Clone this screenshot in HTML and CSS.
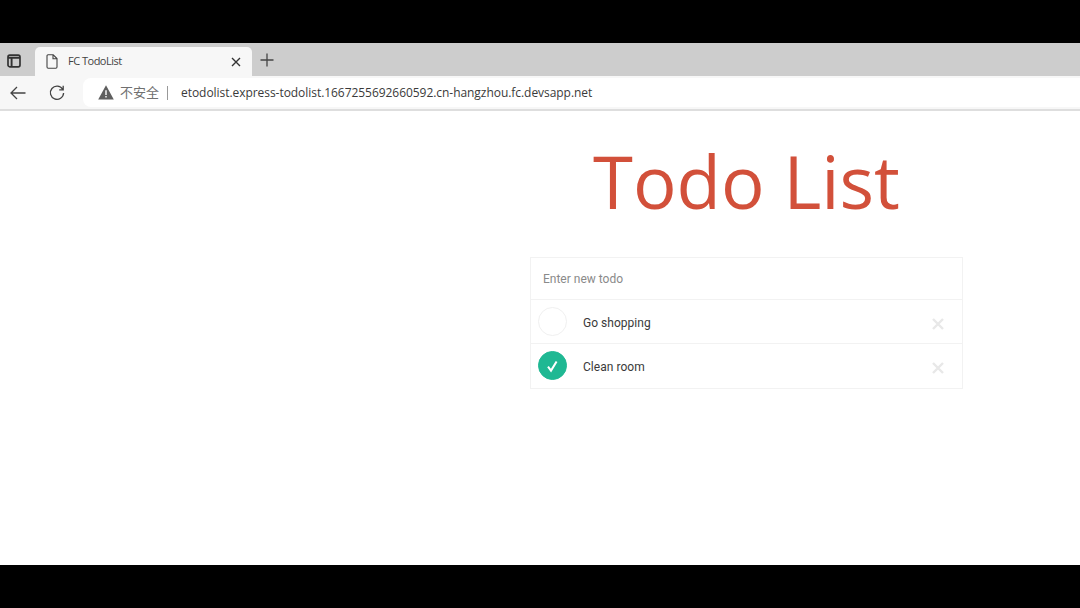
FILE: index.html
```html
<!DOCTYPE html>
<html lang="en">
<head>
<meta charset="utf-8">
<title>FC TodoList</title>
<link rel="stylesheet" href="styles.css">
</head>
<body>
<div class="letterbox"></div>
<div class="browser">
  <div class="tabstrip">
    <span class="winicon"><svg width="14" height="14" viewBox="0 0 14 14"><rect x="1" y="1.2" width="12" height="11.6" rx="1.8" fill="none" stroke="#333" stroke-width="1.7"/><path d="M1 3.8H13M4.6 3.8V12.8" stroke="#333" stroke-width="1.9" fill="none"/></svg></span>
    <div class="tab">
      <svg class="docicon" width="12" height="15" viewBox="0 0 12 15"><path d="M1 1.8A1 1 0 0 1 2 .8H7.2L11 4.6V13A1.2 1.2 0 0 1 9.8 14.2H2.2A1.2 1.2 0 0 1 1 13ZM7 1V4.8H11" fill="none" stroke="#444" stroke-width="1.1"/></svg>
      <span class="tabtitle">FC TodoList</span>
      <svg class="tabclose" width="10" height="10" viewBox="0 0 10 10"><path d="M1 1L9 9M9 1L1 9" stroke="#333" stroke-width="1.4"/></svg>
    </div>
    <svg class="plus" width="14" height="14" viewBox="0 0 14 14"><path d="M7 0.5V13.5M0.5 7H13.5" stroke="#444" stroke-width="1.3"/></svg>
  </div>
  <div class="toolbar">
    <svg class="back" width="16" height="14" viewBox="0 0 16 14"><path d="M15.5 7H1.2M7 1L1 7L7 13" fill="none" stroke="#444" stroke-width="1.3"/></svg>
    <svg class="reload" width="16" height="16" viewBox="0 0 16 16"><path d="M13.6 4.2A6.6 6.6 0 1 0 14.6 8M14.2 .8V4.8H10.2" fill="none" stroke="#444" stroke-width="1.3"/></svg>
    <div class="omnibox">
      <svg class="warn" width="16" height="15" viewBox="0 0 16 15"><path fill-rule="evenodd" d="M8 .3L15.8 14.5H.2ZM7.3 5.2V10H8.7V5.2ZM7.3 11V12.6H8.7V11Z" fill="#5f5f5f"/></svg>
      <span class="insecure">不安全</span>
      <span class="divider"></span>
      <span class="url">etodolist.express-todolist.1667255692660592.cn-hangzhou.fc.devsapp.net</span>
    </div>
  </div>
  <main class="page">
    <section class="app">
      <h1 class="title">Todo List</h1>
      <div class="card">
        <div class="newtodo">Enter new todo</div>
        <div class="row">
          <span class="check"></span>
          <span class="label">Go shopping</span>
          <svg class="remove" width="12" height="12" viewBox="0 0 12 12"><path d="M1 1L11 11M11 1L1 11" stroke="#e8e8e8" stroke-width="2.4"/></svg>
        </div>
        <div class="row">
          <span class="check done"><svg width="14" height="14" viewBox="0 0 14 14"><path d="M2 7.6L5 11.6L10.6 2.4" fill="none" stroke="#fff" stroke-width="2"/></svg></span>
          <span class="label">Clean room</span>
          <svg class="remove" width="12" height="12" viewBox="0 0 12 12"><path d="M1 1L11 11M11 1L1 11" stroke="#e8e8e8" stroke-width="2.4"/></svg>
        </div>
      </div>
    </section>
  </main>
</div>
<div class="letterbox bottom"></div>
</body>
</html>
```
FILE: styles.css
```css
* { box-sizing: border-box; }
html, body { margin: 0; height: 100%; }
body {
  width: 1080px;
  height: 608px;
  overflow: hidden;
  background: #000;
  display: flex;
  flex-direction: column;
  font-family: "Open Sans", "Noto Sans CJK SC", sans-serif;
}
.letterbox { height: 43px; background: #000; flex: none; }
.browser { height: 522px; flex: none; display: flex; flex-direction: column; background: #fff; }
.tabstrip {
  height: 33px;
  background: #cdcdcd;
  display: flex;
  align-items: flex-end;
  flex: none;
}
.winicon { width: 35px; height: 33px; display: flex; align-items: center; justify-content: center; padding: 3px 7px 0 0; }
.tab {
  width: 217px;
  height: 29px;
  background: #f7f7f7;
  border-radius: 5px 5px 0 0;
  display: flex;
  align-items: center;
  padding: 0 11px 0 11px;
}
.docicon { flex: none; }
.tabtitle { font-size: 11px; color: #444; margin: -2px 0 0 10px; flex: 1; letter-spacing: -0.5px; }
.tabclose { flex: none; }
.plus { margin: 0 0 9px 8px; }
.toolbar {
  height: 35px;
  flex: none;
  background: #f7f7f7;
  border-bottom: 2px solid #dedede;
  display: flex;
  align-items: center;
  padding-left: 10px;
}
.back { flex: none; }
.reload { flex: none; margin-left: 23px; }
.omnibox {
  flex: 1;
  height: 29px;
  margin-left: 18px;
  background: #fff;
  border-radius: 8px 0 0 8px;
  display: flex;
  align-items: center;
  padding-left: 15px;
}
.warn { flex: none; }
.insecure { font-size: 13px; color: #707070; margin: -2px 0 0 6px; font-family: "Noto Sans CJK SC", sans-serif; }
.divider { width: 1px; height: 14px; background: #999; margin: 0 13px 0 8px; }
.url { font-size: 12px; color: #3a3a3a; white-space: nowrap; letter-spacing: -0.05px; }
.page { flex: 1; display: flex; justify-content: flex-end; padding-right: 117px; }
.app { width: 433px; }
.title {
  margin: 24px 0 0;
  height: 122px;
  font-family: "Open Sans", sans-serif;
  font-weight: 400;
  font-size: 72.5px;
  line-height: 92px;
  text-align: center;
  color: #d2503a;
}
.card { border: 1px solid #f2f2f2; padding-bottom: 1px; }
.newtodo {
  height: 41px;
  padding-left: 12px;
  display: flex;
  align-items: center;
  font-family: Roboto, sans-serif;
  font-size: 12px;
  color: #8a8a8a;
}
.row {
  height: 44px;
  border-top: 1px solid #f2f2f2;
  display: flex;
  align-items: center;
  padding: 0 18px 0 7px;
}
.check {
  width: 29px;
  height: 29px;
  border-radius: 50%;
  border: 1px solid #f0f0f0;
  flex: none;
  display: flex;
  align-items: center;
  justify-content: center;
}
.check.done { background: #1fb893; border-color: #1fb893; }
.label {
  flex: 1;
  margin: 2px 0 0 16px;
  font-family: Roboto, sans-serif;
  font-size: 12px;
  color: #3a3a3a;
  letter-spacing: 0.03px;
}
.remove { flex: none; margin-top: 5px; }
```
